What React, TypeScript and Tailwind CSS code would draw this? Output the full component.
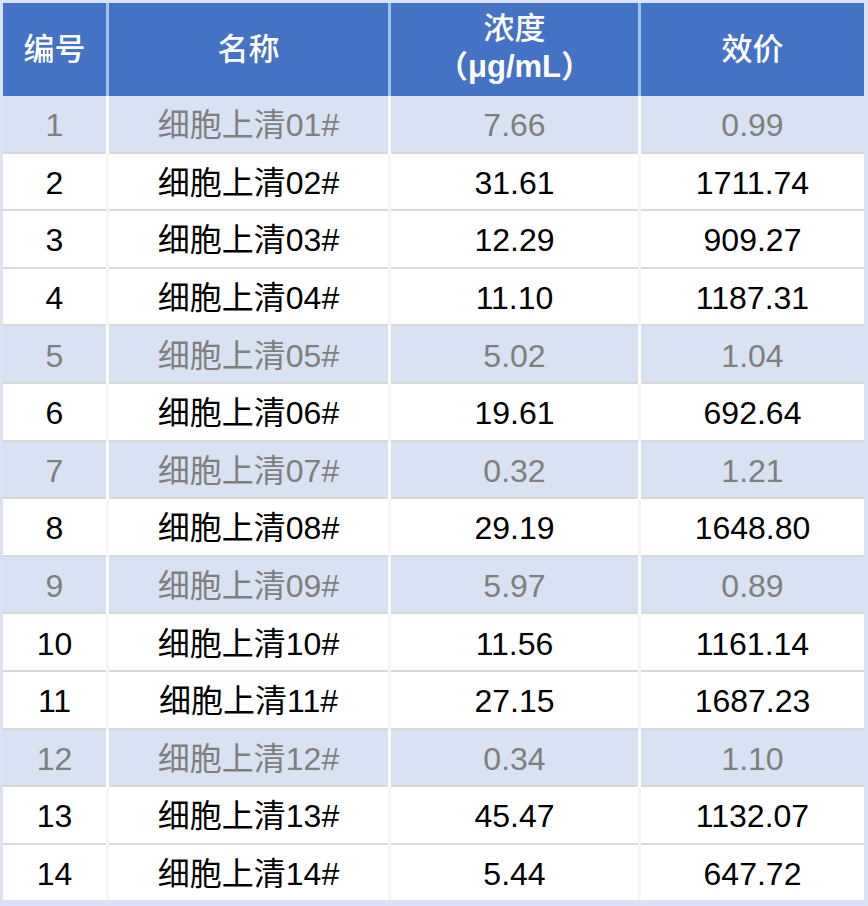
import React from 'react';

type Row = { id: number; name: string; conc: string; titer: string; low: boolean };

const rows: Row[] = [
  { id: 1, name: '细胞上清01#', conc: '7.66', titer: '0.99', low: true },
  { id: 2, name: '细胞上清02#', conc: '31.61', titer: '1711.74', low: false },
  { id: 3, name: '细胞上清03#', conc: '12.29', titer: '909.27', low: false },
  { id: 4, name: '细胞上清04#', conc: '11.10', titer: '1187.31', low: false },
  { id: 5, name: '细胞上清05#', conc: '5.02', titer: '1.04', low: true },
  { id: 6, name: '细胞上清06#', conc: '19.61', titer: '692.64', low: false },
  { id: 7, name: '细胞上清07#', conc: '0.32', titer: '1.21', low: true },
  { id: 8, name: '细胞上清08#', conc: '29.19', titer: '1648.80', low: false },
  { id: 9, name: '细胞上清09#', conc: '5.97', titer: '0.89', low: true },
  { id: 10, name: '细胞上清10#', conc: '11.56', titer: '1161.14', low: false },
  { id: 11, name: '细胞上清11#', conc: '27.15', titer: '1687.23', low: false },
  { id: 12, name: '细胞上清12#', conc: '0.34', titer: '1.10', low: true },
  { id: 13, name: '细胞上清13#', conc: '45.47', titer: '1132.07', low: false },
  { id: 14, name: '细胞上清14#', conc: '5.44', titer: '647.72', low: false },
];

const cols = 'grid grid-cols-[103px_279px_247px_223px] gap-x-[3px]';

export default function App() {
  return (
    <div
      className="w-[868px] h-[906px] bg-[#dae3f3] pt-[3px] pl-[3px] pr-[4px] pb-[6px]"
      style={{ fontFamily: '"Liberation Sans", "Noto Sans CJK SC", sans-serif' }}
    >
      {/* header */}
      <div className={`${cols} bg-[#a4c3e8] h-[93px] text-white text-[31px] leading-[38px] font-medium`}>
        <div className="bg-[#4472c4] flex items-center justify-center">编号</div>
        <div className="bg-[#4472c4] flex items-center justify-center">名称</div>
        <div className="bg-[#4472c4] flex flex-col items-center justify-center pb-[4px]">
          <span>浓度</span>
          <span className="font-bold">（μg/mL）</span>
        </div>
        <div className="bg-[#4472c4] flex items-center justify-center">效价</div>
      </div>

      {rows.map((r, i) => {
        const last = i === rows.length - 1;
        const cell = r.low
          ? 'bg-[#d9e2f3] text-[#7f7f7f]'
          : 'bg-white text-black';
        const border = last ? '' : 'border-b-[2.6px] border-[#d9d9d9]';
        return (
          <div
            key={r.id}
            className={`${cols} ${r.low ? 'bg-white' : 'bg-[#f3f7fc]'} ${last ? 'h-[55px]' : 'h-[57.6px]'} text-[32px]`}
          >
            {[String(r.id), r.name, r.conc, r.titer].map((t, j) => (
              <div key={j} className={`${cell} ${border} flex items-center justify-center pt-[3px]`}>
                {t}
              </div>
            ))}
          </div>
        );
      })}
    </div>
  );
}
